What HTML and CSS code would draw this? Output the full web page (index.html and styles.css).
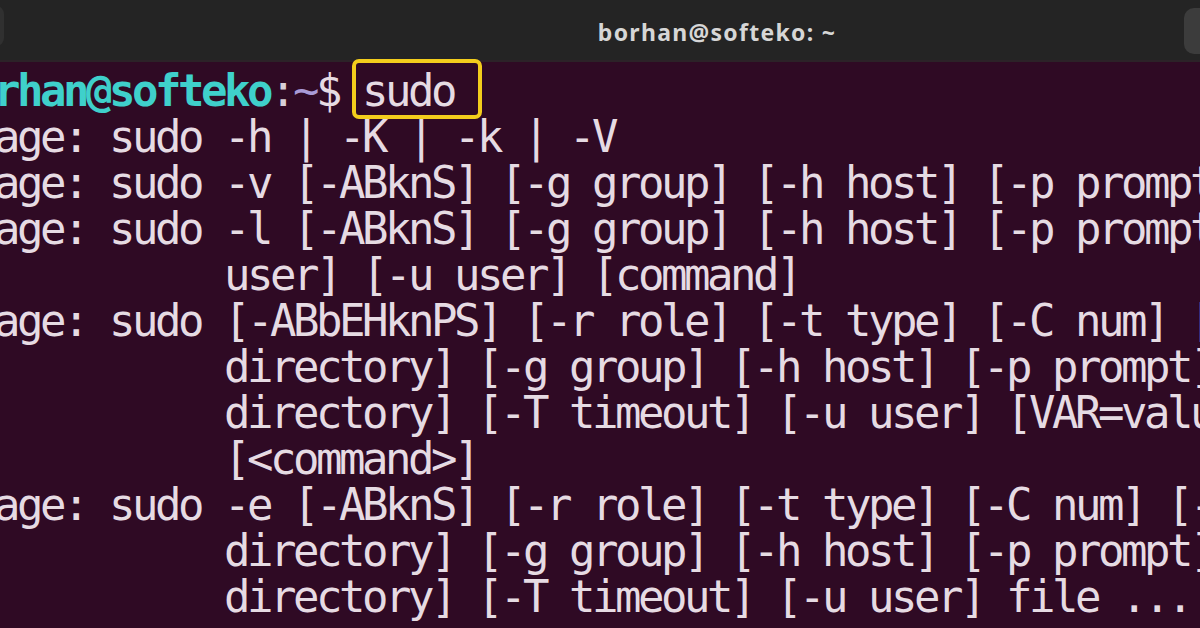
FILE: index.html
```html
<!DOCTYPE html>
<html lang="en">
<head>
<meta charset="utf-8">
<title>borhan@softeko: ~</title>
<link rel="stylesheet" href="styles.css">
</head>
<body>
<div class="window">
  <header class="titlebar">
    <span class="btn-left"></span>
    <span class="title">borhan@softeko: ~</span>
    <span class="btn-right"></span>
  </header>
  <main class="term">
<pre class="screen"><span class="user">borhan@softeko</span><span class="colon">:</span><span class="path">~</span><span class="dollar">$</span> <span class="cmd">sudo</span>
usage: sudo -h | -K | -k | -V
usage: sudo -v [-ABknS] [-g group] [-h host] [-p prompt] [-u user]
usage: sudo -l [-ABknS] [-g group] [-h host] [-p prompt] [-U
            user] [-u user] [command]
usage: sudo [-ABbEHknPS] [-r role] [-t type] [-C num] [-D
            directory] [-g group] [-h host] [-p prompt] [-R
            directory] [-T timeout] [-u user] [VAR=value] [-i|-s]
            [&lt;command&gt;]
usage: sudo -e [-ABknS] [-r role] [-t type] [-C num] [-D
            directory] [-g group] [-h host] [-p prompt] [-R
            directory] [-T timeout] [-u user] file ...</pre>
  </main>
</div>
</body>
</html>
```

FILE: styles.css
```css
html, body {
  margin: 0;
  padding: 0;
  width: 1200px;
  height: 628px;
  overflow: hidden;
  background: #2f0a24;
}

.window {
  display: flex;
  flex-direction: column;
  height: 628px;
}

.titlebar {
  position: relative;
  height: 62px;
  flex: none;
  display: flex;
  align-items: center;
  justify-content: center;
  padding-left: 234px;
  background: #242424;
  border-bottom: 2px solid #2c2228;
  box-sizing: border-box;
  overflow: hidden;
}

.title {
  font-family: "Noto Sans", "DejaVu Sans", sans-serif;
  font-weight: 700;
  font-size: 23px;
  color: #d6d6d6;
  letter-spacing: 1.3px;
  margin-top: 4px;
}

.btn-left {
  position: absolute;
  left: -30px;
  top: 6px;
  width: 34px;
  height: 40px;
  border-radius: 8px;
  background: #303030;
}

.btn-right {
  position: absolute;
  right: -30px;
  top: 8px;
  width: 46px;
  height: 46px;
  border-radius: 10px;
  background: #3c3c3c;
}

.term {
  flex: 1;
  background: #2f0a24;
  overflow-x: clip;
  overflow-y: visible;
}

.screen {
  margin: 0 0 0 -52px;
  padding-top: 6px;
  font-family: "DejaVu Sans Mono", "Liberation Mono", monospace;
  font-size: 44px;
  letter-spacing: -3.49px;
  line-height: 46px;
  color: #e6dbe3;
  white-space: pre;
}

.user {
  color: #3fd0cb;
  font-weight: 700;
}

.colon {
  color: #d8d0d8;
}

.path {
  color: #a99ad6;
}

.dollar {
  color: #e6dbe3;
}

.cmd {
  position: relative;
}

.cmd::after {
  content: "";
  position: absolute;
  top: -6px;
  bottom: -3px;
  left: -10px;
  right: -28px;
  border: 4px solid #f3cd1c;
  border-radius: 7px;
}
```
